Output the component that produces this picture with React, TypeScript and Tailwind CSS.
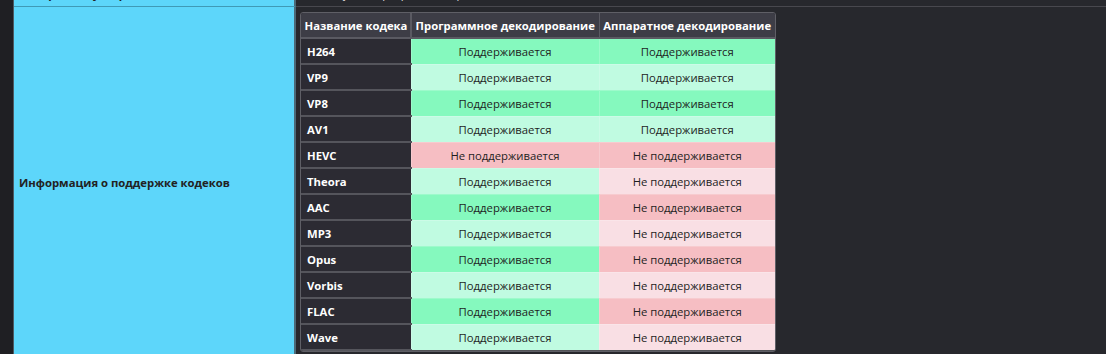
import React from "react";

type Codec = {
	name: string;
	sw: boolean;
	hw: boolean;
};

const codecs: Codec[] = [
	{ name: "H264", sw: true, hw: true },
	{ name: "VP9", sw: true, hw: true },
	{ name: "VP8", sw: true, hw: true },
	{ name: "AV1", sw: true, hw: true },
	{ name: "HEVC", sw: false, hw: false },
	{ name: "Theora", sw: true, hw: false },
	{ name: "AAC", sw: true, hw: false },
	{ name: "MP3", sw: true, hw: false },
	{ name: "Opus", sw: true, hw: false },
	{ name: "Vorbis", sw: true, hw: false },
	{ name: "FLAC", sw: true, hw: false },
	{ name: "Wave", sw: true, hw: false },
];

const font = { fontFamily: '"Open Sans", "Noto Sans", sans-serif' };

const StatusCell = ({ ok, strong }: { ok: boolean; strong: boolean }) => {
	const bg = ok
		? strong
			? "bg-[#85f9be]"
			: "bg-[#c0fbe1]"
		: strong
			? "bg-[#f6bec3]"
			: "bg-[#f9dfe4]";
	return (
		<td className={`h-[26px] p-0 pt-[2px] text-center text-[11.3px] whitespace-nowrap text-[#1e1e1e] border-l border-b border-white/20 ${bg}`}>
			{ok ? "Поддерживается" : "Не поддерживается"}
		</td>
	);
};

export default function App() {
	return (
		<div className="w-[1106px] h-[354px] overflow-hidden bg-[#1f1f23] pl-[13px]" style={font}>
			<div className="flex flex-col border-l border-[#4d5a63] h-full">
				{/* previous row, cut off at the top */}
				<div className="flex h-[7px] shrink-0 overflow-hidden">
					<div className="w-[282px] bg-[#5dd6fa] border-b border-[#3f9ab6] border-r-2 border-r-[#4d6a78] overflow-hidden">
						<div className="-mt-[14px] pl-[5px] text-[11.3px] font-bold text-[#222]">Аппаратное ускорение видео</div>
					</div>
					<div className="flex-1 bg-[#27282d] border-b border-[#48484e] overflow-hidden">
						<div className="-mt-[14px] pl-[8px] text-[11.3px] text-[#ddd]">Недоступно, программный режим</div>
					</div>
				</div>
				<div className="flex flex-1">
					<div className="w-[282px] shrink-0 bg-[#5dd6fa] border-r-2 border-r-[#4d6a78] flex items-center pl-[5px] pt-[6px]">
						<span className="text-[11.3px] font-bold text-[#222]">Информация о поддержке кодеков</span>
					</div>
					<div className="flex-1 bg-[#27282d] pl-[4px] pt-[5px]">
						<div className="w-[476px] rounded-[3px] border border-[#5f5f66] overflow-hidden">
							<table className="w-full border-collapse table-fixed">
								<thead>
									<tr className="bg-[#3d3d46] text-[11.3px] font-bold text-white">
										<th className="h-[25px] w-[110px] p-0 pt-[2px] pl-[1px] text-center whitespace-nowrap border-b-2 border-[#5a5a62] font-bold">Название кодека</th>
										<th className="h-[25px] w-[188px] p-0 pt-[2px] text-center whitespace-nowrap border-b-2 border-l-2 border-[#5a5a62] font-bold">Программное декодирование</th>
										<th className="h-[25px] p-0 pt-[2px] text-center whitespace-nowrap border-b-2 border-l border-[#5a5a62] font-bold">Аппаратное декодирование</th>
									</tr>
								</thead>
								<tbody>
									{codecs.map((c, i) => (
										<tr key={c.name}>
											<td className="h-[26px] p-0 pt-[2px] pl-[6px] text-[11.3px] font-bold text-white bg-[#2c2b33] border-b-2 border-[#55555c]">
												{c.name}
											</td>
											<StatusCell ok={c.sw} strong={i % 2 === 0} />
											<StatusCell ok={c.hw} strong={i % 2 === 0} />
										</tr>
									))}
								</tbody>
							</table>
						</div>
					</div>
				</div>
			</div>
		</div>
	);
}
